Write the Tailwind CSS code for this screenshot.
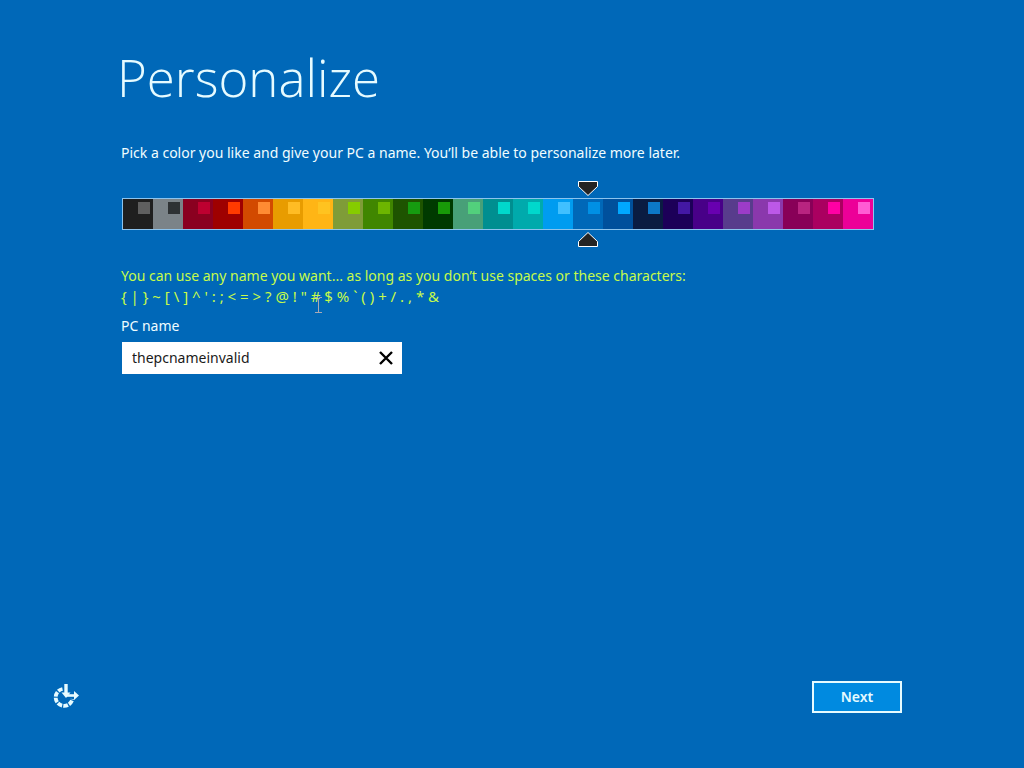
<!DOCTYPE html>
<html lang="en">
<head>
  <meta charset="utf-8">
  <meta name="viewport" content="width=device-width, initial-scale=1">
  <title>Personalize</title>
  <script src="https://cdn.jsdelivr.net/npm/@tailwindcss/browser@4"></script>
</head>
<body class="bg-[#0068b8] text-[#f0fdff] font-['Noto_Sans','Open_Sans',sans-serif] text-[14px] leading-5">
  <form class="min-h-screen flex flex-col pt-10 pb-[55px]" onsubmit="return false">
    <main class="relative pl-[121px] pr-8">
      <h1 class="font-['Open_Sans',sans-serif] font-light text-[51px] leading-[74px] text-[#e6fbff] -ml-1">Personalize</h1>
      <p class="mt-[29px]">Pick a color you like and give your PC a name. You’ll be able to personalize more later.</p>

      <!-- Color strip -->
      <div id="colors" role="radiogroup" aria-label="Color" class="mt-[35px] ml-px flex w-[752px] border border-[#8cc4ee]"></div>

      <!-- Name error -->
      <div class="mt-9 text-[#c6fb4a]">
        <p>You can use any name you want... as long as you don’t use spaces or these characters:</p>
        <p class="text-[15px] leading-5">{ | } ~ [ \ ] ^ ' : ; &lt; = &gt; ? @ ! " # $ % ` ( ) + / . , * &amp;</p>
      </div>

      <label for="pc-name" class="block mt-[10px]">PC name</label>
      <div class="mt-[6px] ml-px flex w-[280px] h-8 bg-white text-[#1a1a1a]">
        <input id="pc-name" type="text" value="thepcnameinvalid" class="min-w-0 flex-1 pl-[10px] outline-none">
        <button type="button" id="clear-name" aria-label="Clear" class="w-8 flex items-center justify-center">
          <svg class="w-4 h-4" viewBox="0 0 16 16" fill="none" stroke="#000" stroke-width="2.4">
            <path d="M2 2l12 12M14 2L2 14"/>
          </svg>
        </button>
      </div>

      <!-- Text cursor -->
      <svg class="absolute left-[314px] top-[257px] w-2 h-4" viewBox="0 0 8 16" fill="none" stroke="#a9a9b4">
        <path d="M1 .5h2.500l1 1 1-1H8M4.500 1v14M1 15.500h7"/>
      </svg>
    </main>

    <footer class="mt-auto flex items-center justify-between pl-[52px] pr-[122px]">
      <button type="button" aria-label="Ease of access" class="w-7 h-7">
        <svg class="w-7 h-7" viewBox="0 0 28 28" fill="none" stroke="#e6fbff">
          <path d="M10.500 6A8.500 8.500 0 1 0 20.500 16" stroke-width="3.800" stroke-dasharray="4.800 1.200"/>
          <path d="M14 1v11" stroke-width="3.400"/>
          <path d="M14 12.500h9" stroke-width="2.600"/>
          <path d="M9.500 9.500h9L14 15z" fill="#e6fbff" stroke="none"/>
          <path d="M22 8l5 4.500-5 4.500z" fill="#e6fbff" stroke="none"/>
        </svg>
      </button>
      <button type="submit" class="w-[90px] h-8 border-2 border-[#e6fbff] bg-[#008ae0] font-semibold text-[#e6fbff]">Next</button>
    </footer>
  </form>

  <script>
    // background, accent
    var colors = [
      ["#1f1f1f", "#5f5f5f"], ["#7b8388", "#2e3234"], ["#8a0020", "#bd0030"], ["#9e0000", "#ff3a00"],
      ["#d24a00", "#ff8b33"], ["#e89c00", "#ffbc24"], ["#ffb515", "#ffc320"], ["#7f9c38", "#86cc00"],
      ["#408600", "#6db500"], ["#1e5400", "#169c10"], ["#003a00", "#189a08"], ["#48a078", "#52d07c"],
      ["#008e90", "#00d8cc"], ["#00aaac", "#00d8cc"], ["#009cf0", "#40c0ff"], ["#0068b8", "#0090e4"],
      ["#00509c", "#00a8ff"], ["#0a1c42", "#0c78c8"], ["#1c0058", "#4318a4"], ["#480088", "#6800b0"],
      ["#583c8c", "#9c3cc8"], ["#8a38ac", "#bc58e8"], ["#880058", "#b82480"], ["#aa0060", "#ff00a4"],
      ["#ec0098", "#ff5cd4"]
    ];
    var selected = 15;

    document.getElementById("colors").innerHTML = colors.map(function(c, i) {
      return `
        <label class="relative block w-[30px] h-[30px]" style="background:${c[0]}">
          <input type="radio" name="color" value="${i}" aria-label="Color ${i + 1}" class="peer sr-only" ${i === selected ? "checked" : ""}>
          <span class="absolute top-[3px] right-[3px] w-3 h-3" style="background:${c[1]}"></span>
          <svg class="hidden peer-checked:block absolute left-[5px] -top-[18px] w-5 h-[15px]" viewBox="0 0 20 15" fill="#242424" stroke="#fff">
            <path d="M.5.5h19v5L10 14.500 .5 5.500z"/>
          </svg>
          <svg class="hidden peer-checked:block absolute left-[5px] -bottom-[18px] w-5 h-[15px]" viewBox="0 0 20 15" fill="#242424" stroke="#fff">
            <path d="M.5 14.500h19v-5L10 .5 .5 9.500z"/>
          </svg>
        </label>`;
    }).join("");

    document.getElementById("clear-name").addEventListener("click", function() {
      document.getElementById("pc-name").value = "";
    });
  </script>
</body>
</html>
